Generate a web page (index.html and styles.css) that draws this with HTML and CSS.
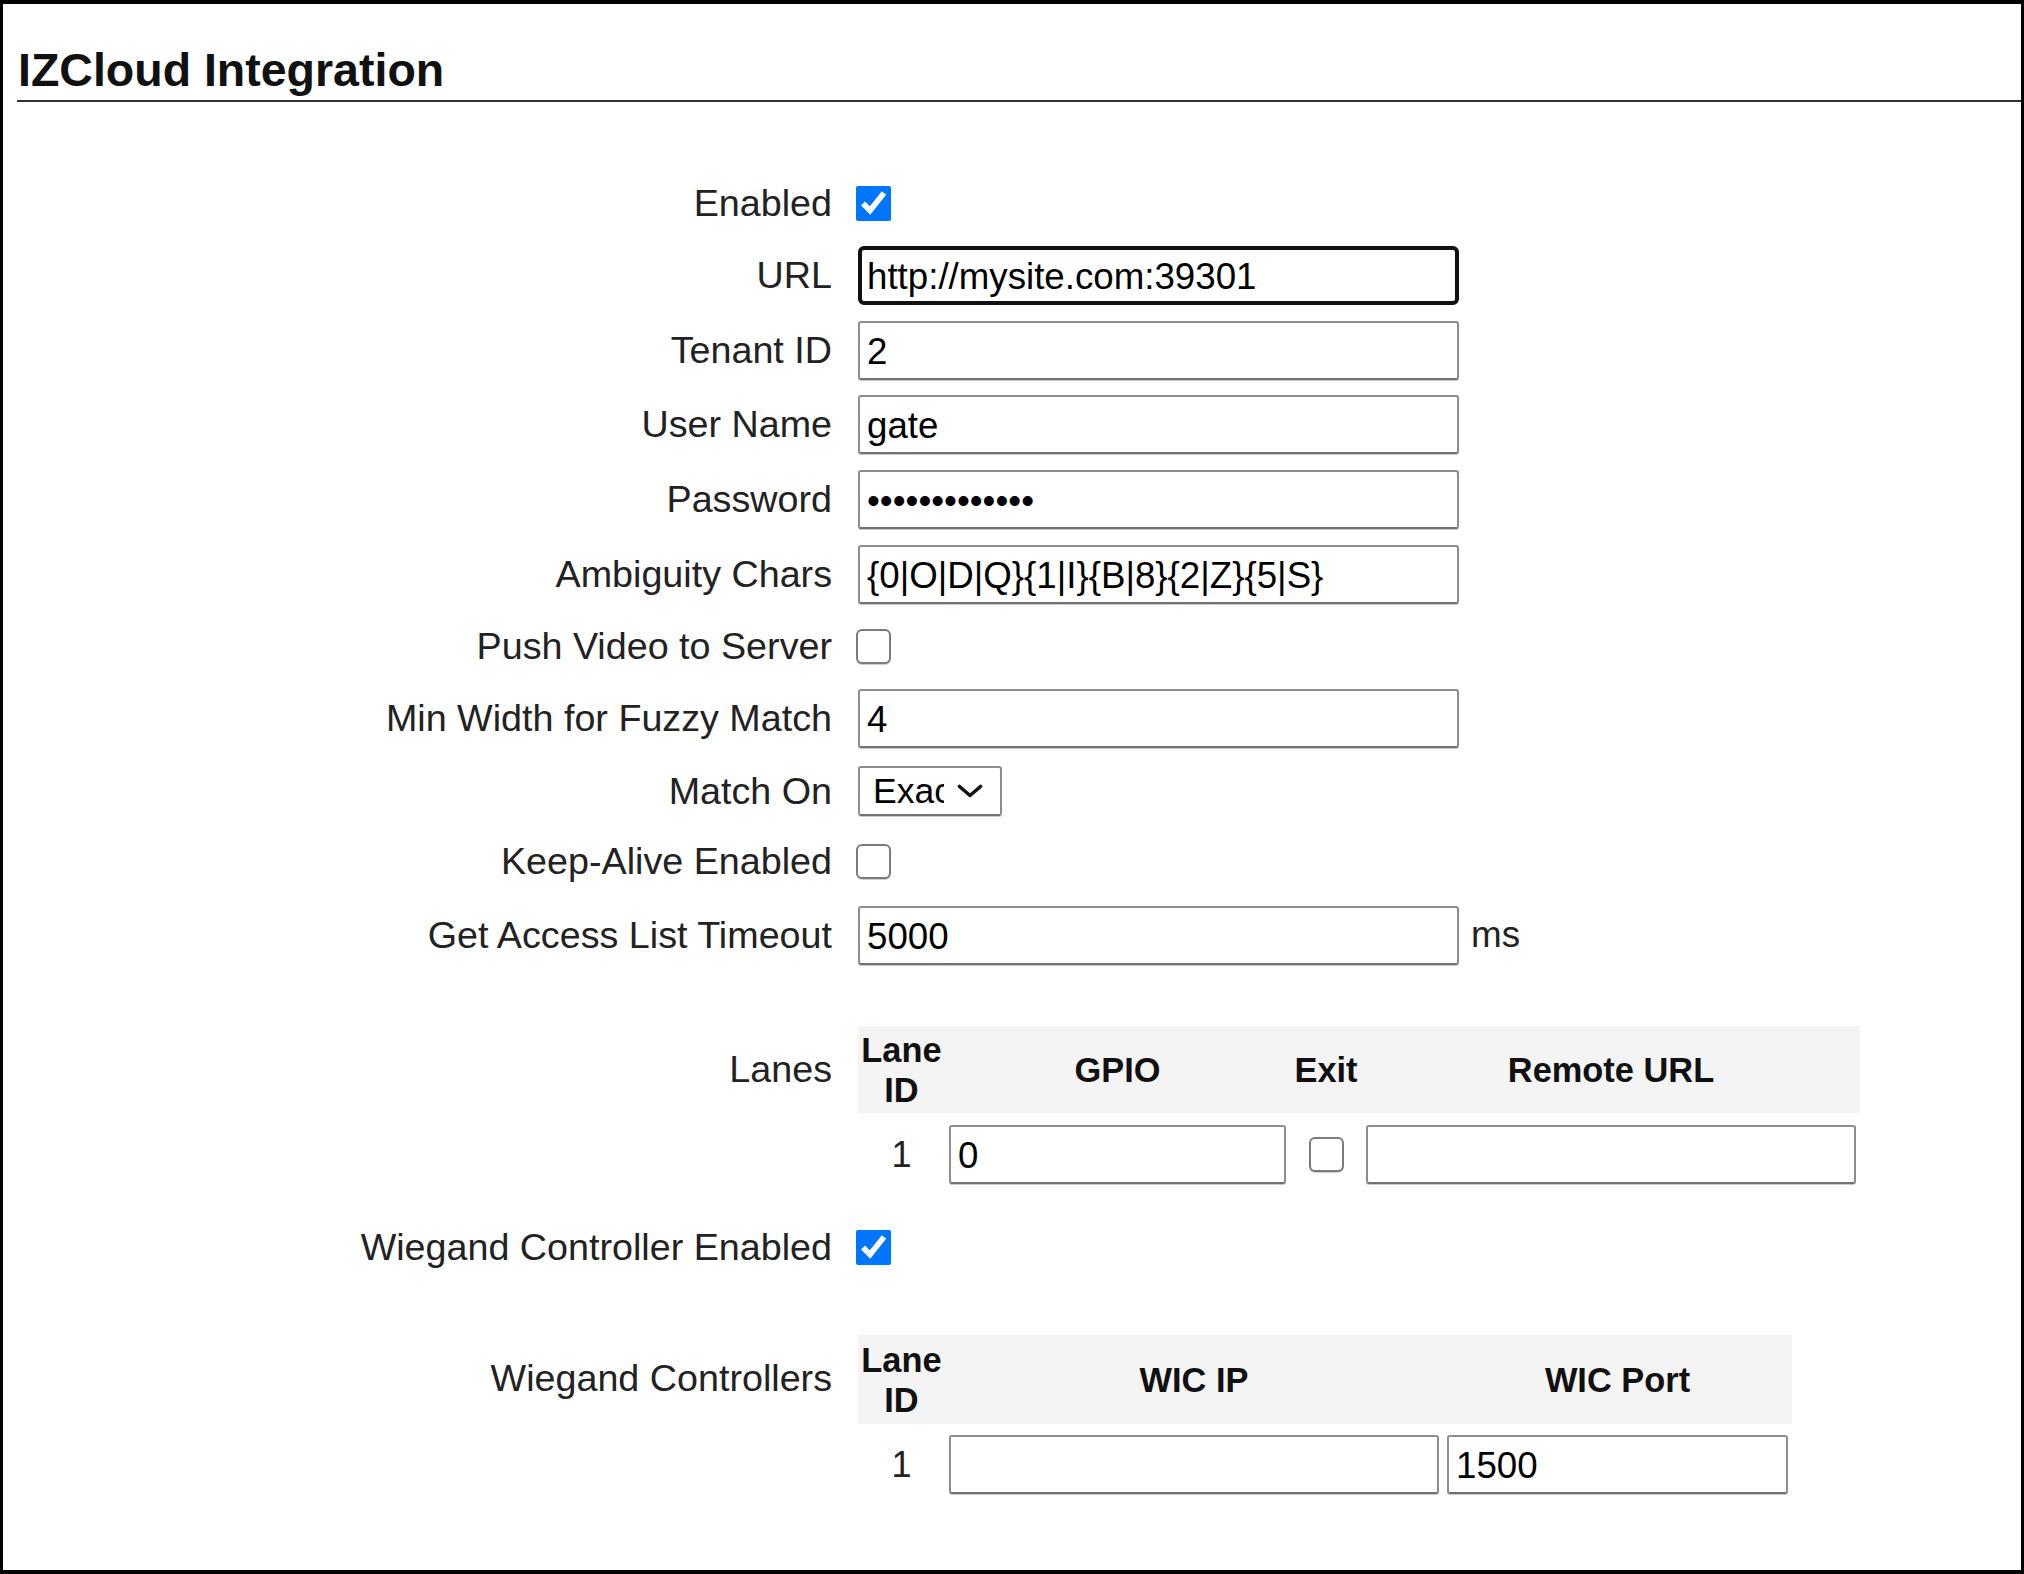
FILE: index.html
```html
<!DOCTYPE html>
<html lang="en">
<head>
<meta charset="utf-8">
<title>IZCloud Integration</title>
<link rel="stylesheet" href="styles.css">
</head>
<body>
<div class="frame">
  <h2 class="title">IZCloud Integration</h2>
  <div class="form">
    <div class="row row-check">
      <label class="lbl">Enabled</label>
      <div class="ctl"><input type="checkbox" class="cb" checked></div>
    </div>
    <div class="row row-input">
      <label class="lbl">URL</label>
      <div class="ctl"><input type="text" class="txt focused" value="http://mysite.com:39301"></div>
    </div>
    <div class="row row-input">
      <label class="lbl">Tenant ID</label>
      <div class="ctl"><input type="text" class="txt" value="2"></div>
    </div>
    <div class="row row-input">
      <label class="lbl">User Name</label>
      <div class="ctl"><input type="text" class="txt" value="gate"></div>
    </div>
    <div class="row row-input">
      <label class="lbl">Password</label>
      <div class="ctl"><input type="password" class="txt pwd" value="abcdefghijklm"></div>
    </div>
    <div class="row row-input">
      <label class="lbl">Ambiguity Chars</label>
      <div class="ctl"><input type="text" class="txt" value="{0|O|D|Q}{1|I}{B|8}{2|Z}{5|S}"></div>
    </div>
    <div class="row row-check">
      <label class="lbl">Push Video to Server</label>
      <div class="ctl"><input type="checkbox" class="cb"></div>
    </div>
    <div class="row row-input">
      <label class="lbl">Min Width for Fuzzy Match</label>
      <div class="ctl"><input type="text" class="txt" value="4"></div>
    </div>
    <div class="row row-select">
      <label class="lbl">Match On</label>
      <div class="ctl">
        <div class="select">
          <span class="select-text">Exact</span>
          <svg class="chev" width="26" height="14" viewBox="0 0 26 14"><path d="M2.5 2.5 L13 11.5 L23.5 2.5" fill="none" stroke="#111" stroke-width="3.6" stroke-linecap="round" stroke-linejoin="round"/></svg>
        </div>
      </div>
    </div>
    <div class="row row-check row-keep">
      <label class="lbl">Keep-Alive Enabled</label>
      <div class="ctl"><input type="checkbox" class="cb"></div>
    </div>
    <div class="row row-input">
      <label class="lbl">Get Access List Timeout</label>
      <div class="ctl"><input type="text" class="txt" value="5000"><span class="unit">ms</span></div>
    </div>

    <div class="row row-table lanes">
      <label class="lbl">Lanes</label>
      <div class="ctl">
        <table class="grid lanes-table">
          <colgroup><col class="c-lane"><col class="c-gpio"><col class="c-exit"><col class="c-remote"></colgroup>
          <thead>
            <tr><th class="th-lane">Lane ID</th><th>GPIO</th><th>Exit</th><th>Remote URL</th></tr>
          </thead>
          <tbody>
            <tr>
              <td class="td-id">1</td>
              <td><input type="text" class="txt cell" value="0"></td>
              <td class="td-center"><input type="checkbox" class="cb"></td>
              <td><input type="text" class="txt cell" value=""></td>
            </tr>
          </tbody>
        </table>
      </div>
    </div>

    <div class="row row-check wiegand-en">
      <label class="lbl">Wiegand Controller Enabled</label>
      <div class="ctl"><input type="checkbox" class="cb" checked></div>
    </div>

    <div class="row row-table wiegand">
      <label class="lbl">Wiegand Controllers</label>
      <div class="ctl">
        <table class="grid wic-table">
          <colgroup><col class="c-lane"><col class="c-ip"><col class="c-port"></colgroup>
          <thead>
            <tr><th class="th-lane">Lane ID</th><th>WIC IP</th><th>WIC Port</th></tr>
          </thead>
          <tbody>
            <tr>
              <td class="td-id">1</td>
              <td><input type="text" class="txt cell" value=""></td>
              <td><input type="text" class="txt cell" value="1500"></td>
            </tr>
          </tbody>
        </table>
      </div>
    </div>
  </div>
</div>
</body>
</html>
```

FILE: styles.css
```css
html, body {
  margin: 0;
  padding: 0;
  background: #fff;
}

body {
  font-family: "Liberation Sans", Arial, sans-serif;
  color: #222;
}

.frame {
  width: 2024px;
  height: 1574px;
  box-sizing: border-box;
  border: 3px solid #000;
  border-top-width: 4px;
  border-bottom-width: 4px;
  overflow: hidden;
}

.title {
  margin: 40px 0 0 14px;
  padding: 0 0 3px 1px;
  font-size: 46.5px;
  line-height: 53px;
  font-weight: bold;
  color: #111;
  border-bottom: 2px solid #333;
}

.form {
  margin-top: 74px;
  display: flex;
  flex-direction: column;
  gap: 15.75px;
}

.row {
  display: grid;
  grid-template-columns: 829px 1fr;
  column-gap: 26px;
  align-items: center;
}

.row-check { height: 54px; }
.row-keep { height: 56px; }
.row-input { height: 59px; }
.row-select { height: 54px; }

.row-table {
  align-items: start;
}

.lanes { margin-top: 45.75px; }
.wiegand-en { margin-top: 20.25px; }
.wiegand { margin-top: 45.25px; }

.lbl {
  text-align: right;
  white-space: nowrap;
  font-size: 37.7px;
  line-height: 43px;
  color: #222;
}

.row-table .lbl {
  padding-top: 22px;
}

.ctl {
  display: flex;
  align-items: center;
}

.txt {
  box-sizing: border-box;
  width: 601px;
  height: 59px;
  margin: 0;
  padding: 3px 7px 0;
  border: 2px solid #8d8d8d;
  border-bottom-color: #727272;
  border-radius: 3px;
  box-shadow: 0 1px 0 #c8c8c8;
  font-family: "Liberation Sans", Arial, sans-serif;
  font-size: 36.7px;
  color: #000;
  background: #fff;
  outline: none;
}

.txt.focused {
  border: 4px solid #111;
  border-radius: 6px;
  padding: 3px 5px 0;
  box-shadow: none;
}

.pwd {
  letter-spacing: 0;
}

.cb {
  width: 35px;
  height: 35px;
  margin: 0 0 0 -2px;
  accent-color: #0075ff;
}

.cb:not(:checked) {
  appearance: none;
  -webkit-appearance: none;
  box-sizing: border-box;
  border: 2.5px solid #7b7b7b;
  border-radius: 6px;
  background: #fff;
  box-shadow: 0 1px 0 #d0d0d0;
}

.select {
  box-sizing: border-box;
  width: 144px;
  height: 50px;
  display: flex;
  align-items: center;
  padding-left: 13px;
  border: 2px solid #8d8d8d;
  border-bottom-color: #727272;
  border-radius: 3px;
  box-shadow: 0 1px 0 #c8c8c8;
}

.select-text {
  display: block;
  width: 71px;
  overflow: hidden;
  white-space: nowrap;
  font-size: 35.5px;
  line-height: 46px;
  color: #000;
}

.chev {
  margin-left: 13px;
  flex: none;
}

.unit {
  margin-left: 12px;
  font-size: 36.8px;
  color: #222;
}

.grid {
  border-collapse: collapse;
  border-spacing: 0;
  table-layout: fixed;
}

.lanes-table { width: 1002px; }
.wic-table { width: 934px; }

.c-lane { width: 87px; }
.c-gpio { width: 345px; }
.c-exit { width: 72px; }
.c-remote { width: 498px; }
.c-ip { width: 498px; }
.c-port { width: 349px; }

.grid thead tr {
  background: #f4f4f4;
}

.grid th {
  font-size: 34.4px;
  line-height: 40px;
  font-weight: bold;
  color: #111;
  padding: 3.5px 4px;
  text-align: center;
  vertical-align: middle;
}

.wic-table th {
  padding-top: 4.5px;
  padding-bottom: 4.5px;
}

.grid th.th-lane {
  padding-left: 0;
  padding-right: 0;
}

.grid td {
  padding: 12px 4px 0;
  vertical-align: middle;
}

.wic-table td {
  padding-top: 11px;
}

.td-id {
  text-align: center;
  font-size: 36px;
  color: #222;
}

.td-center {
  text-align: center;
}

.td-center .cb {
  margin: 0;
  vertical-align: middle;
}

.txt.cell {
  width: 100%;
}
```
